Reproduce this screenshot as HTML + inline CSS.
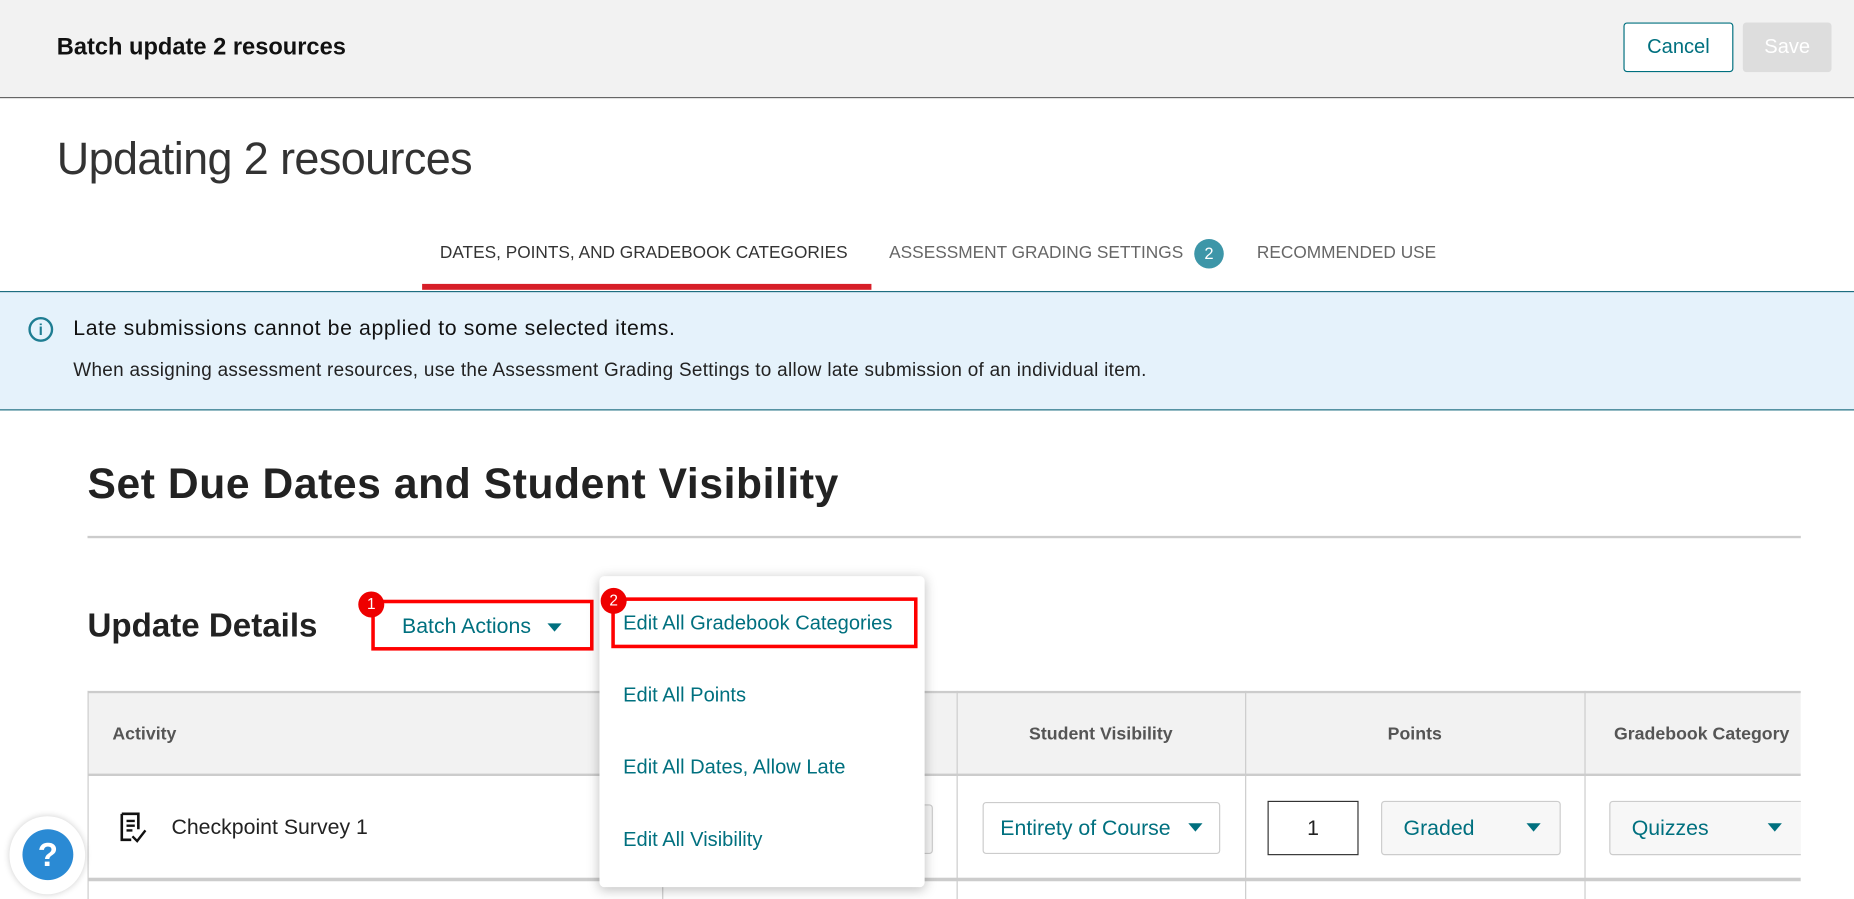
<!DOCTYPE html>
<html><head><meta charset="utf-8"><style>
*{box-sizing:border-box;margin:0;padding:0}
html,body{width:1854px;height:899px;overflow:hidden;background:#fff}
#w{position:absolute;left:0;top:0;width:1568px;height:760px;transform:scale(1.18240,1.18289);transform-origin:0 0;font-family:"Liberation Sans",sans-serif;color:#222}
.a{position:absolute;white-space:nowrap}
.teal{color:#00707f}
.sel{position:absolute;border:1px solid #ccc;border-radius:3px;background:#f7f7f7;color:#00707f;font-size:18px;display:flex;align-items:center;padding-left:18px}
.car{position:absolute;width:0;height:0;border-left:6px solid transparent;border-right:6px solid transparent;border-top:7px solid #00707f}
</style></head><body><div id="w">
<div class="a" style="left:0;top:0;width:1568px;height:83px;background:#f2f2f2;border-bottom:1px solid #666"></div>
<div class="a" style="left:48px;top:29px;font-size:20px;font-weight:bold;color:#111">Batch update 2 resources</div>
<div class="a" style="left:1373px;top:19px;width:93px;height:42px;border:1px solid #00707f;border-radius:3px;color:#00707f;font-size:17px;text-align:center;line-height:40px;background:#fff">Cancel</div>
<div class="a" style="left:1474px;top:19px;width:75px;height:42px;border-radius:3px;background:#ddd;color:#fff;font-size:17px;text-align:center;line-height:42px">Save</div>
<div class="a" style="left:48px;top:114px;font-size:38px;font-weight:300;color:#333;letter-spacing:-0.5px">Updating 2 resources</div>
<div class="a" style="left:372px;top:206px;font-size:14.6px;color:#333">DATES, POINTS, AND GRADEBOOK CATEGORIES</div>
<div class="a" style="left:357px;top:240px;width:380px;height:5px;background:#d71e28"></div>
<div class="a" style="left:752px;top:206px;font-size:14.6px;color:#666">ASSESSMENT GRADING SETTINGS</div>
<div class="a" style="left:1010px;top:202px;width:25px;height:25px;border-radius:50%;background:#3d96a8;color:#fff;font-size:14px;text-align:center;line-height:25px">2</div>
<div class="a" style="left:1063px;top:206px;font-size:14.6px;color:#666">RECOMMENDED USE</div>
<div class="a" style="left:0;top:246px;width:1568px;height:101px;background:#e5f2fb;border-top:1px solid #1e6e80;border-bottom:1px solid #1e6e80"></div>
<div class="a" style="left:24px;top:268px;width:21px;height:21px;border:2px solid #1e7d92;border-radius:50%;color:#1e7d92;font-size:13px;font-weight:bold;text-align:center;line-height:17px">i</div>
<div class="a" style="left:62px;top:267px;font-size:18px;letter-spacing:0.5px;color:#111">Late submissions cannot be applied to some selected items.</div>
<div class="a" style="left:62px;top:305px;font-size:16px;letter-spacing:0.25px;color:#222">When assigning assessment resources, use the Assessment Grading Settings to allow late submission of an individual item.</div>
<div class="a" style="left:74px;top:388px;font-size:36px;letter-spacing:0.5px;font-weight:bold;color:#222">Set Due Dates and Student Visibility</div>
<div class="a" style="left:74px;top:453px;width:1449px;height:2px;background:#ccc"></div>
<div class="a" style="left:74px;top:513px;font-size:28px;font-weight:bold;color:#222">Update Details</div>
<div class="a" style="left:314px;top:507px;width:188px;height:43px;border:3px solid #f00"></div>
<div class="a teal" style="left:340px;top:519px;font-size:18px">Batch Actions</div>
<div class="car" style="left:463px;top:527px"></div>
<div class="a" style="left:303px;top:500px;width:22px;height:22px;border-radius:50%;background:#e00;color:#fff;font-size:13px;text-align:center;line-height:22px">1</div>
<div class="a" style="left:74px;top:584px;width:1449px;height:176px;overflow:hidden">
 <div class="a" style="left:0;top:0;width:1449px;height:72px;background:#f2f2f2;border-top:2px solid #ccc;border-bottom:2px solid #ccc"></div>
 <div class="a" style="left:0;top:0;width:1px;height:176px;background:#ccc"></div>
 <div class="a" style="left:486px;top:0;width:1px;height:176px;background:#ccc"></div>
 <div class="a" style="left:735px;top:0;width:1px;height:176px;background:#ccc"></div>
 <div class="a" style="left:979px;top:0;width:1px;height:176px;background:#ccc"></div>
 <div class="a" style="left:1266px;top:0;width:1px;height:176px;background:#ccc"></div>
 <div class="a" style="left:0;top:158px;width:1449px;height:3px;background:#ccc"></div>
 <div class="a" style="left:21px;top:28px;font-size:15px;color:#555;font-weight:bold">Activity</div>
 <div class="a" style="left:735px;width:244px;top:28px;font-size:15px;color:#555;font-weight:bold;text-align:center">Student Visibility</div>
 <div class="a" style="left:979px;width:287px;top:28px;font-size:15px;color:#555;font-weight:bold;text-align:center">Points</div>
 <div class="a" style="left:1291px;top:28px;font-size:15px;color:#555;font-weight:bold">Gradebook Category</div>
 <svg class="a" style="left:26px;top:102px" width="26" height="28" viewBox="0 0 26 28"><path d="M3 2h14v13M3 2v22h8" fill="none" stroke="#111" stroke-width="2.2"/><path d="M7 8h7M7 12h7M7 16h5" stroke="#111" stroke-width="2"/><path d="M12 21l4 4 7-9" fill="none" stroke="#111" stroke-width="2"/></svg>
 <div class="a" style="left:71px;top:105px;font-size:18px;color:#222">Checkpoint Survey 1</div>
 <div class="sel" style="left:600px;top:96px;width:115px;height:42px"></div>
 <div class="sel" style="left:757px;top:94px;width:201px;height:44px;background:#fff;padding-left:14px">Entirety of Course</div>
 <div class="car" style="left:931px;top:112px"></div>
 <div class="a" style="left:998px;top:93px;width:77px;height:46px;border:1px solid #333;font-size:18px;text-align:center;line-height:44px">1</div>
 <div class="sel" style="left:1094px;top:93px;width:152px;height:46px">Graded</div>
 <div class="car" style="left:1217px;top:112px"></div>
 <div class="sel" style="left:1287px;top:93px;width:170px;height:46px">Quizzes</div>
 <div class="car" style="left:1421px;top:112px"></div>
</div>
<div class="a" style="left:507px;top:487px;width:275px;height:263px;background:#fff;border-radius:4px;box-shadow:0 2px 10px rgba(0,0,0,.25)"></div>
<div class="a" style="left:517px;top:505px;width:259px;height:43px;border:3px solid #f00"></div>
<div class="a teal" style="left:527px;top:517px;font-size:17px">Edit All Gradebook Categories</div>
<div class="a" style="left:508px;top:497px;width:22px;height:22px;border-radius:50%;background:#e00;color:#fff;font-size:13px;text-align:center;line-height:22px">2</div>
<div class="a teal" style="left:527px;top:578px;font-size:17px">Edit All Points</div>
<div class="a teal" style="left:527px;top:639px;font-size:17px">Edit All Dates, Allow Late</div>
<div class="a teal" style="left:527px;top:700px;font-size:17px">Edit All Visibility</div>
<div class="a" style="left:8px;top:690px;width:64px;height:66px;border-radius:50%;background:#fff;box-shadow:0 0 6px rgba(0,0,0,.2)"></div>
<div class="a" style="left:19px;top:701px;width:43px;height:43px;border-radius:50%;background:#2a8ad4;color:#fff;font-size:28px;font-weight:bold;text-align:center;line-height:43px">?</div>
</div></body></html>
